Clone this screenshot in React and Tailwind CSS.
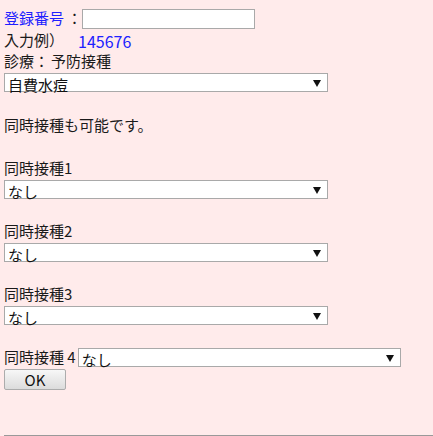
import React from "react";

const font = { fontFamily: '"Noto Sans CJK JP", "Noto Sans", sans-serif' };

function Sel({ value, className = "" }) {
  return (
    <div className={"relative h-[19px] bg-white border border-[#a9a9a9] " + className}>
      <select
        defaultValue={value}
        className="appearance-none w-full h-full bg-transparent pl-[3px] text-[15px] leading-[17px] text-[#111] outline-none"
        style={font}
      >
        <option>{value}</option>
      </select>
      <svg
        className="absolute right-[6px] top-[6px] pointer-events-none"
        width="8"
        height="7"
        viewBox="0 0 8 7"
      >
        <path d="M0 0 H8 L4 7 Z" fill="#111" />
      </svg>
    </div>
  );
}

function Group({ label }) {
  return (
    <>
      <div className="h-[21px]" />
      <div className="h-[21px] flex items-center">{label}</div>
      <div className="h-[21px] flex items-center">
        <Sel value="なし" className="w-[324px]" />
      </div>
    </>
  );
}

export default function App() {
  return (
    <div
      className="min-h-[436px] bg-[#ffebeb] text-[15px] text-[#1a1a1a] pt-[7px] pl-[4px]"
      style={font}
    >
      <div className="h-[23px] flex items-center">
        <span className="text-[#2020ff]">登録番号</span>
        <span className="ml-[3px]">：</span>
        <input
          type="text"
          className="w-[173px] h-[20px] bg-white border border-[#a9a9a9] outline-none"
        />
      </div>
      <div className="h-[21px] flex items-center">
        <span>入力例）</span>
        <span className="ml-[14px] text-[#2020ff] text-[16px]">145676</span>
      </div>
      <div className="h-[21px] flex items-center">
        <span>診療：</span>
        <span className="ml-[2px]">予防接種</span>
      </div>
      <div className="h-[21px] flex items-center">
        <Sel value="自費水痘" className="w-[324px]" />
      </div>
      <div className="h-[21px]" />
      <div className="h-[23px] flex items-center">同時接種も可能です。</div>
      <Group label="同時接種1" />
      <Group label="同時接種2" />
      <Group label="同時接種3" />
      <div className="h-[21px]" />
      <div className="h-[21px] flex items-center">
        <span className="mr-[2px]">同時接種 4</span>
        <Sel value="なし" className="w-[323px]" />
      </div>
      <div className="h-[23px] flex items-center">
        <button
          className="w-[62px] h-[21px] border border-[#acacac] rounded-[2px] bg-gradient-to-b from-[#f7f7f7] to-[#dcdcdc] text-[15px] text-[#111] leading-none"
          style={font}
        >
          OK
        </button>
      </div>
      <div className="h-[44px]" />
      <div className="border-t border-[#999999]" />
    </div>
  );
}
